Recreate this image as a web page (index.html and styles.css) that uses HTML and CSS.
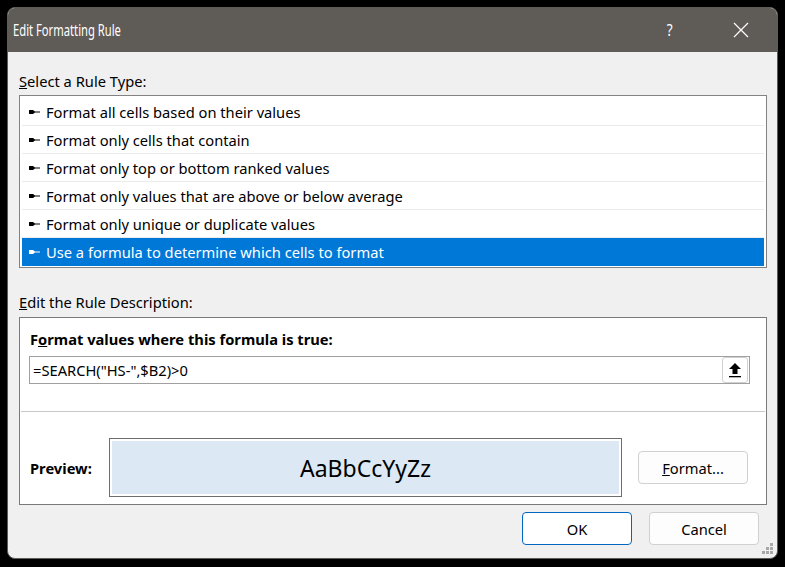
FILE: index.html
```html
<!DOCTYPE html>
<html>
<head>
<meta charset="utf-8">
<link rel="stylesheet" href="styles.css">
</head>
<body>
<div class="dialog">
  <div class="titlebar">
    <span class="title">Edit Formatting Rule</span>
    <span class="help">?</span>
    <svg class="close" width="16" height="16" viewBox="0 0 16 16"><path d="M1 1 L15 15 M15 1 L1 15" stroke="#fff" stroke-width="1.2" fill="none"/></svg>
  </div>
  <div class="content">
    <div class="label first"><u>S</u>elect a Rule Type:</div>
    <div class="listbox">
      <div class="row"><svg class="bullet" width="11" height="6" viewBox="0 0 11 6"><path d="M0 1 H4 L6 2.5 H11 V3.5 H6 L4 5 H0 Z" fill="currentColor"/></svg>Format all cells based on their values</div>
      <div class="row"><svg class="bullet" width="11" height="6" viewBox="0 0 11 6"><path d="M0 1 H4 L6 2.5 H11 V3.5 H6 L4 5 H0 Z" fill="currentColor"/></svg>Format only cells that contain</div>
      <div class="row"><svg class="bullet" width="11" height="6" viewBox="0 0 11 6"><path d="M0 1 H4 L6 2.5 H11 V3.5 H6 L4 5 H0 Z" fill="currentColor"/></svg>Format only top or bottom ranked values</div>
      <div class="row"><svg class="bullet" width="11" height="6" viewBox="0 0 11 6"><path d="M0 1 H4 L6 2.5 H11 V3.5 H6 L4 5 H0 Z" fill="currentColor"/></svg>Format only values that are above or below average</div>
      <div class="row"><svg class="bullet" width="11" height="6" viewBox="0 0 11 6"><path d="M0 1 H4 L6 2.5 H11 V3.5 H6 L4 5 H0 Z" fill="currentColor"/></svg>Format only unique or duplicate values</div>
      <div class="row selected"><svg class="bullet" width="11" height="6" viewBox="0 0 11 6"><path d="M0 1 H4 L6 2.5 H11 V3.5 H6 L4 5 H0 Z" fill="currentColor"/></svg>Use a formula to determine which cells to format</div>
    </div>
    <div class="label second"><u>E</u>dit the Rule Description:</div>
    <div class="group">
      <div class="bold-label">F<u>o</u>rmat values where this formula is true:</div>
      <div class="formula">
        <span class="formula-text">=SEARCH("HS-",$B2)&gt;0</span>
        <div class="collapse"><svg width="14" height="16" viewBox="0 0 14 16"><path d="M7 1 L13 7 H9.5 V12 H4.5 V7 H1 Z" fill="#000"/><rect x="1" y="14" width="12" height="1.3" fill="#000"/></svg></div>
      </div>
      <div class="sep"></div>
      <div class="preview-row">
        <div class="bold-label preview-label">Preview:</div>
        <div class="preview-box"><div class="preview-fill">AaBbCcYyZz</div></div>
        <div class="btn format-btn"><u>F</u>ormat...</div>
      </div>
    </div>
    <div class="buttons">
      <div class="btn ok">OK</div>
      <div class="btn">Cancel</div>
    </div>
  </div>
  <div class="grip">
    <i class="d" style="grid-area:1/3"></i>
    <i class="d" style="grid-area:2/2"></i><i class="d" style="grid-area:2/3"></i>
    <i class="d" style="grid-area:3/1"></i><i class="d" style="grid-area:3/2"></i><i class="d" style="grid-area:3/3"></i>
  </div>
</div>
</body>
</html>
```
FILE: styles.css
```css
html, body {
  margin: 0;
  padding: 0;
  background: #000;
  width: 785px;
  height: 567px;
  overflow: hidden;
  font-family: "Noto Sans", "Open Sans", sans-serif;
  font-size: 14.7px;
  color: #000;
}
.dialog {
  position: relative;
  margin: 7px 0 0 7px;
  width: 771px;
  height: 552px;
  box-sizing: border-box;
  border: 1px solid #5f5b57;
  border-radius: 8px;
  overflow: hidden;
  background: #f0f0f0;
  display: flex;
  flex-direction: column;
}
.titlebar {
  height: 45px;
  margin: -1px -1px 0 -1px;
  background: #5f5b57;
  display: flex;
  align-items: center;
  color: #fff;
  flex: none;
}
.title {
  display: inline-block;
  margin-left: 6px;
  font-size: 16.5px;
  transform: scaleX(0.68);
  transform-origin: left center;
  white-space: nowrap;
}
.help {
  margin-left: auto;
  font-size: 17px;
  transform: scaleX(0.8);
  margin-right: 60px;
}
.close {
  margin-right: 29px;
}
.content {
  padding: 0 10px 0 11px;
  display: flex;
  flex-direction: column;
}
.label {
  line-height: 20px;
  height: 20px;
}
.label.first { margin-top: 19px; margin-bottom: 4px; }
.label.second { margin-top: 24px; margin-bottom: 5px; }
.listbox {
  border: 1px solid #828282;
  padding: 2px 2px 1px 2px;
  background: #fff;
  display: flex;
  flex-direction: column;
}
.row {
  height: 28px;
  box-sizing: border-box;
  border-bottom: 1px solid #ececec;
  display: flex;
  align-items: center;
  padding-left: 7px;
  white-space: nowrap;
  color: #000;
}
.row .bullet {
  margin-right: 6px;
  flex: none;
}
.row.selected {
  background: #0078d7;
  color: #fff;
  border-bottom: none;
}
.group {
  border: 1px solid #7a7a7a;
  background: #fff;
  height: 188px;
  box-sizing: border-box;
  padding: 11px 0 0 0;
  display: flex;
  flex-direction: column;
}
.bold-label {
  font-weight: bold;
  line-height: 20px;
  padding-left: 10px;
}
.formula {
  margin: 7px 16px 0 9px;
  height: 28px;
  box-sizing: border-box;
  border: 1px solid #a0a0a0;
  display: flex;
  align-items: center;
}
.formula-text {
  padding-left: 3px;
  flex: 1;
}
.collapse {
  width: 26px;
  height: 26px;
  box-sizing: border-box;
  border: 1px solid #d0d0d0;
  border-radius: 3px;
  margin-right: 1px;
  display: flex;
  align-items: center;
  justify-content: center;
}
.sep {
  height: 1px;
  background: #c8c8c8;
  margin: 27px 1px 0 1px;
}
.preview-row {
  margin-top: 26px;
  display: flex;
  align-items: center;
}
.preview-label {
  width: 89px;
  box-sizing: border-box;
  flex: none;
}
.preview-box {
  width: 513px;
  height: 59px;
  box-sizing: border-box;
  border: 1px solid #6e6e6e;
  padding: 2px;
  background: #fff;
  flex: none;
}
.preview-fill {
  height: 100%;
  background: #dce9f5;
  display: flex;
  align-items: center;
  justify-content: center;
  font-size: 23px;
}
.btn {
  width: 110px;
  height: 33px;
  box-sizing: border-box;
  border: 1px solid #d0d0d0;
  border-radius: 4px;
  background: #fdfdfd;
  display: flex;
  align-items: center;
  justify-content: center;
  flex: none;
}
.format-btn {
  margin-left: 16px;
}
.buttons {
  margin-top: 7px;
  display: flex;
  justify-content: flex-end;
  gap: 17px;
  padding-right: 8px;
}
.btn.ok {
  border: 1px solid #0067c0;
  background: #fff;
}
.grip {
  position: absolute;
  right: 3px;
  bottom: 3px;
  display: grid;
  grid-template-columns: repeat(3, 4px);
  grid-template-rows: repeat(3, 4px);
}
.grip .d {
  width: 3px;
  height: 3px;
  background: #a8a8a8;
}
```
